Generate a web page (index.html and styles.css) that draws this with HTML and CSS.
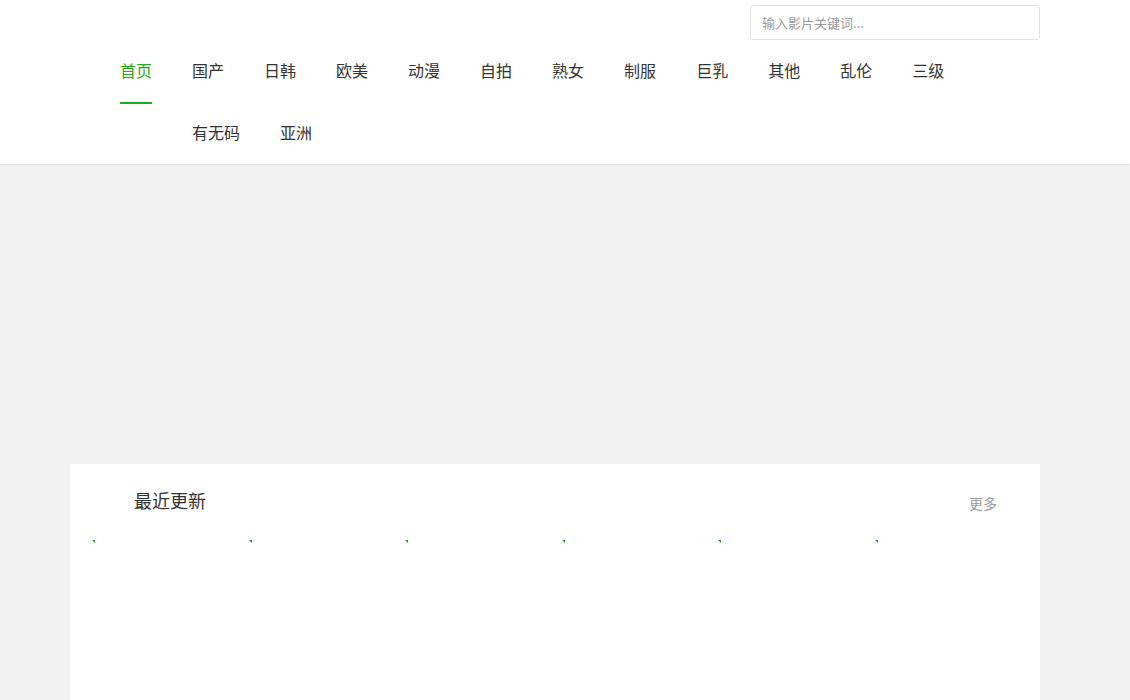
FILE: index.html
```html
<!DOCTYPE html>
<html lang="zh-CN">
<head>
<meta charset="utf-8">
<title>首页</title>
<link rel="stylesheet" href="styles.css">
</head>
<body>
<header class="header">
  <div class="wrap">
    <div class="search-row">
      <input class="search" type="text" placeholder="输入影片关键词...">
    </div>
    <ul class="nav">
      <li class="nav-item active">首页</li>
      <li class="nav-item">国产</li>
      <li class="nav-item">日韩</li>
      <li class="nav-item">欧美</li>
      <li class="nav-item">动漫</li>
      <li class="nav-item">自拍</li>
      <li class="nav-item">熟女</li>
      <li class="nav-item">制服</li>
      <li class="nav-item">巨乳</li>
      <li class="nav-item">其他</li>
      <li class="nav-item">乱伦</li>
      <li class="nav-item">三级</li>
      <li class="nav-item">有无码</li>
      <li class="nav-item">亚洲</li>
    </ul>
  </div>
</header>
<main class="wrap main">
  <section class="card">
    <div class="card-head">
      <h2 class="card-title">最近更新</h2>
      <a class="more">更多</a>
    </div>
    <ul class="list">
      <li class="item"><span class="mark"></span></li>
      <li class="item"><span class="mark"></span></li>
      <li class="item"><span class="mark"></span></li>
      <li class="item"><span class="mark"></span></li>
      <li class="item"><span class="mark"></span></li>
      <li class="item"><span class="mark"></span></li>
    </ul>
  </section>
</main>
</body>
</html>
```
FILE: styles.css
```css
* { box-sizing: border-box; }
html, body { margin: 0; padding: 0; }
body {
  background: #f2f2f2;
  font-family: "Noto Sans CJK SC", "Noto Sans", "Liberation Sans", sans-serif;
  color: #333;
}
.wrap {
  width: 970px;
  margin-left: 70px;
}
.header {
  background: #fff;
  height: 164px;
  box-shadow: 0 1px 2px rgba(0,0,0,0.08);
}
.search-row {
  display: flex;
  justify-content: flex-end;
  padding-top: 5px;
}
.search {
  width: 290px;
  height: 35px;
  border: 1px solid #e2e2e2;
  border-radius: 3px;
  padding: 0 11px;
  font-family: inherit;
  font-size: 13px;
  color: #333;
  outline: none;
}
.search::placeholder { color: #999; }
.nav {
  list-style: none;
  margin: 0 0 0 50px;
  padding: 0;
  width: 920px;
}
.nav-item {
  float: left;
  height: 62px;
  line-height: 61px;
  padding-bottom: 1px;
  margin-right: 40px;
  font-size: 16px;
  color: #333;
}
.nav-item.active {
  color: #22a822;
  height: 64px;
  border-bottom: 2px solid #22a822;
}
.main {
  padding-top: 300px;
}
.card {
  background: #fff;
  height: 400px;
}
.card-head {
  display: flex;
  justify-content: space-between;
  align-items: center;
  height: 74px;
  padding: 0 43px 2px 64px;
}
.card-title {
  margin: 0;
  font-size: 18px;
  font-weight: normal;
  color: #333;
}
.more {
  font-size: 14px;
  color: #999;
  padding-top: 6px;
}
.list {
  list-style: none;
  margin: 0;
  padding: 2px 0 0 22px;
  display: flex;
}
.item {
  width: 156.5px;
  height: 150px;
}
.mark {
  display: block;
  width: 0;
  height: 0;
  border-top: 3px solid #1c9e1c;
  border-left: 3px solid transparent;
}
```
